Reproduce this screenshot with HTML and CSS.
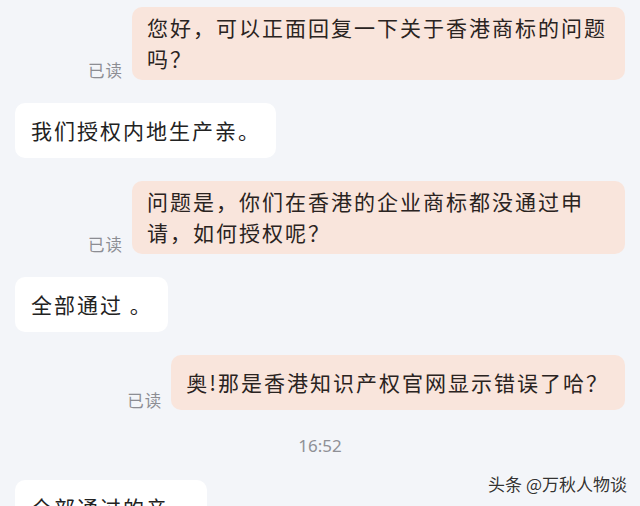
FILE: index.html
```html
<!DOCTYPE html>
<html lang="zh-CN">
<head>
    <meta charset="UTF-8">
    <title>聊天记录</title>
    <link rel="stylesheet" href="styles.css">
</head>
<body>
<div class="chat">
    <div class="row row-out">
        <span class="read">已读</span>
        <div class="bubble bubble-out">您好，可以正面回复一下关于香港商标的问题吗？</div>
    </div>

    <div class="row row-in">
        <div class="bubble bubble-in">我们授权内地生产亲。</div>
    </div>

    <div class="row row-out">
        <span class="read">已读</span>
        <div class="bubble bubble-out">问题是，你们在香港的企业商标都没通过申请，如何授权呢？</div>
    </div>

    <div class="row row-in">
        <div class="bubble bubble-in">全部通过 。</div>
    </div>

    <div class="row row-out">
        <span class="read">已读</span>
        <div class="bubble bubble-out">奥!那是香港知识产权官网显示错误了哈？</div>
    </div>

    <div class="time">16:52</div>

    <div class="row row-in">
        <div class="bubble bubble-in">全部通过的亲。</div>
    </div>
</div>

<div class="watermark">头条 @万秋人物谈</div>
</body>
</html>
```

FILE: styles.css
```css
html, body {
    height: 100%;
    overflow: hidden;
}
body {
    margin: 0;
    padding: 0;
    background-color: #f3f5f9;
    font-family: "Noto Sans CJK SC", "Noto Sans", sans-serif;
    color: #222;
}
.chat {
    display: flex;
    flex-direction: column;
    gap: 23px;
    padding: 7px 15px 0 15px;
}
.row {
    display: flex;
    align-items: flex-end;
}
.row-out {
    justify-content: flex-end;
    gap: 9px;
}
.row-in {
    justify-content: flex-start;
}
.bubble {
    box-sizing: border-box;
    min-height: 55px;
    display: flex;
    align-items: center;
    padding: 5px 15px 6px 16px;
    font-size: 21px;
    letter-spacing: 2px;
    line-height: 31px;
    border-radius: 10px;
    max-width: 493px;
}
.bubble-out {
    background-color: #f9e5dc;
    color: #2a2321;
    padding-left: 15px;
    padding-right: 16px;
}
.bubble-in {
    background-color: #fff;
}
.read {
    font-size: 16.5px;
    letter-spacing: 1px;
    line-height: 20px;
    color: #8c8d93;
}
.time {
    text-align: center;
    font-family: "Noto Sans", sans-serif;
    font-size: 17px;
    line-height: 20px;
    color: #8f9096;
    padding: 3px 0 1px;
}
.watermark {
    position: absolute;
    right: 13px;
    bottom: 11px;
    font-size: 17px;
    line-height: 22px;
    color: #333;
    text-shadow: 0 0 2px #fff, 0 0 2px #fff;
}
```
